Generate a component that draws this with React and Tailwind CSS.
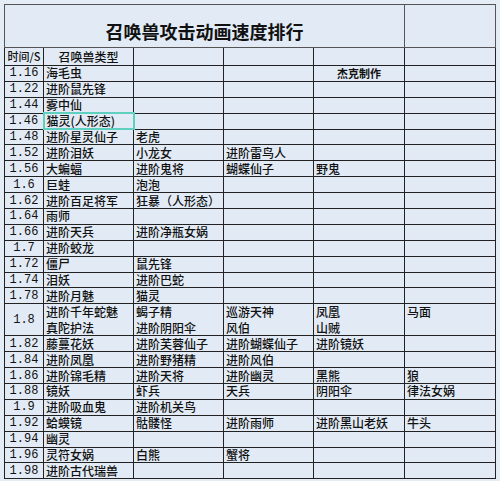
import React from "react";

const rows = [
  ["1.16", "海毛虫", "", "", "杰克制作", ""],
  ["1.22", "进阶鼠先锋", "", "", "", ""],
  ["1.44", "雾中仙", "", "", "", ""],
  ["1.46", "猫灵(人形态)", "", "", "", ""],
  ["1.48", "进阶星灵仙子", "老虎", "", "", ""],
  ["1.52", "进阶泪妖", "小龙女", "进阶雷鸟人", "", ""],
  ["1.56", "大蝙蝠", "进阶鬼将", "蝴蝶仙子", "野鬼", ""],
  ["1.6", "巨蛙", "泡泡", "", "", ""],
  ["1.62", "进阶百足将军", "狂暴（人形态）", "", "", ""],
  ["1.64", "雨师", "", "", "", ""],
  ["1.66", "进阶天兵", "进阶净瓶女娲", "", "", ""],
  ["1.7", "进阶蛟龙", "", "", "", ""],
  ["1.72", "僵尸", "鼠先锋", "", "", ""],
  ["1.74", "泪妖", "进阶巴蛇", "", "", ""],
  ["1.78", "进阶月魅", "猫灵", "", "", ""],
  ["1.8", ["进阶千年蛇魅", "真陀护法"], ["蝎子精", "进阶阴阳伞"], ["巡游天神", "风伯"], ["凤凰", "山贼"], ["马面", ""]],
  ["1.82", "藤蔓花妖", "进阶芙蓉仙子", "进阶蝴蝶仙子", "进阶镜妖", ""],
  ["1.84", "进阶凤凰", "进阶野猪精", "进阶风伯", "", ""],
  ["1.86", "进阶锦毛精", "进阶天将", "进阶幽灵", "黑熊", "狼"],
  ["1.88", "镜妖", "虾兵", "天兵", "阴阳伞", "律法女娲"],
  ["1.9", "进阶吸血鬼", "进阶机关鸟", "", "", ""],
  ["1.92", "蛤蟆镜", "骷髅怪", "进阶雨师", "进阶黑山老妖", "牛头"],
  ["1.94", "幽灵", "", "", "", ""],
  ["1.96", "灵符女娲", "白熊", "蟹将", "", ""],
  ["1.98", "进阶古代瑞兽", "", "", "", ""],
];

const cjk = { fontFamily: '"Noto Sans CJK SC", "Noto Sans", sans-serif' };
const mono = { fontFamily: '"Liberation Mono", "DejaVu Sans Mono", monospace' };

export default function App() {
  return (
    <div className="w-[500px] h-[481px] overflow-hidden bg-[#e4edf6] pl-[4px] pt-[4px] text-[#111]">
      <table className="table-fixed border-collapse w-[491px] bg-[#e2ebf5]" style={cjk}>
        <colgroup>
          <col className="w-[39px]" />
          <col className="w-[90px]" />
          <col className="w-[90px]" />
          <col className="w-[90px]" />
          <col className="w-[91px]" />
          <col className="w-[91px]" />
        </colgroup>
        <tbody>
          <tr className="h-[43px]">
            <td colSpan={5} className="border border-[#555] p-0 pt-[9px] text-center text-[18px] font-bold leading-none">
              召唤兽攻击动画速度排行
            </td>
            <td className="border border-[#555] p-0"></td>
          </tr>
          <tr className="h-[18px]">
            <td className="border border-[#222] p-0 text-center text-[11px] font-medium leading-none whitespace-nowrap">时间/S</td>
            <td className="border border-[#222] p-0 text-center text-[12px] font-medium leading-none">召唤兽类型</td>
            <td className="border border-[#222] p-0"></td>
            <td className="border border-[#222] p-0"></td>
            <td className="border border-[#222] p-0"></td>
            <td className="border border-[#222] p-0"></td>
          </tr>
          {rows.map((r, i) => {
            const tall = Array.isArray(r[1]);
            return (
              <tr key={i} className={tall ? "h-[32px]" : "h-[15.9px]"}>
                <td className="border border-[#222] p-0 text-center text-[12px] leading-none whitespace-nowrap" style={mono}>
                  {r[0]}
                </td>
                {r.slice(1).map((c, j) => {
                  const teal = i === 3 && j === 0;
                  const center = i === 0 && j === 3;
                  return (
                    <td
                      key={j}
                      className={
                        (teal ? "border-2 border-[#5fcfbf] " : "border border-[#222] ") +
                        (center ? "text-center text-[11px] font-bold " : "pl-[2px] text-[12px] font-medium ") +
                        "p-0 leading-none whitespace-nowrap overflow-hidden"
                      }
                    >
                      {tall ? (
                        <div className="flex flex-col gap-[4px]">
                          <span className="h-[12px]">{c[0]}</span>
                          <span className="h-[12px]">{c[1]}</span>
                        </div>
                      ) : (
                        c
                      )}
                    </td>
                  );
                })}
              </tr>
            );
          })}
        </tbody>
      </table>
    </div>
  );
}
